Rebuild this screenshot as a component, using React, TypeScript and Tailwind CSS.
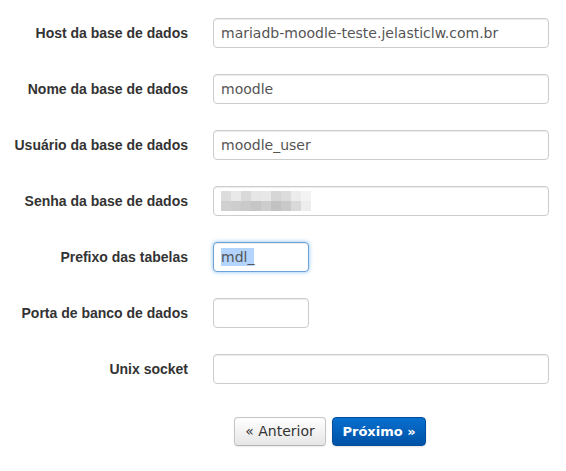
const labelCls =
  "w-[188px] shrink-0 text-right text-[14px] font-bold text-[#333] font-['Liberation_Sans',Arial,sans-serif]";
const inputCls =
  "h-[30px] rounded-[4px] border border-[#ccc] bg-white px-[7px] text-[14px] text-[#555] font-['DejaVu_Sans',Verdana,sans-serif] shadow-[inset_0_1px_1px_rgba(0,0,0,0.075)] outline-none";

// pixelated blur over the password
const blurTop = [
  'bg-[#dcdcdc]', 'bg-[#e9e9e9]', 'bg-[#d9d9d9]', 'bg-[#e6e6e6]', 'bg-[#e8e8e8]',
  'bg-[#d6d6d6]', 'bg-[#dcdcdc]', 'bg-[#ececec]', 'bg-[#f3f3f3]',
];
const blurBottom = [
  'bg-[#d0d0d0]', 'bg-[#cdcdcd]', 'bg-[#cacaca]', 'bg-[#c6c6c6]', 'bg-[#cdcdcd]',
  'bg-[#c2c2c2]', 'bg-[#c9c9c9]', 'bg-[#d9d9d9]', 'bg-[#ededed]',
];

function Row({ label, children }: { label: string; children: React.ReactNode }) {
  return (
    <div className="flex items-center h-[30px]">
      <label className={labelCls}>{label}</label>
      <div className="ml-[25px] flex">{children}</div>
    </div>
  );
}

export default function App() {
  return (
    <div className="w-[566px] h-[471px] bg-white pt-[18px]">
      <div className="flex flex-col gap-[26px]">
        <Row label="Host da base de dados">
          <input className={`${inputCls} w-[336px]`} defaultValue="mariadb-moodle-teste.jelasticlw.com.br" />
        </Row>
        <Row label="Nome da base de dados">
          <input className={`${inputCls} w-[336px]`} defaultValue="moodle" />
        </Row>
        <Row label="Usuário da base de dados">
          <input className={`${inputCls} w-[336px]`} defaultValue="moodle_user" />
        </Row>
        <Row label="Senha da base de dados">
          <div className={`${inputCls} w-[336px] flex items-center`}>
            <div className="grid grid-cols-9 w-[90px] h-[20px] blur-[0.4px]">
              {blurTop.map((c, i) => (
                <span key={`t${i}`} className={c} />
              ))}
              {blurBottom.map((c, i) => (
                <span key={`b${i}`} className={c} />
              ))}
            </div>
          </div>
        </Row>
        <Row label="Prefixo das tabelas">
          <div className="h-[30px] w-[96px] rounded-[4px] border border-[#6fa0d8] bg-white px-[7px] flex items-center shadow-[inset_0_1px_1px_rgba(0,0,0,0.075),0_0_4px_rgba(82,168,236,0.7)]">
            <span className="bg-[#b3d4fc] text-[14px] leading-[18px] text-[#555] font-['DejaVu_Sans',Verdana,sans-serif]">
              mdl_
            </span>
          </div>
        </Row>
        <Row label="Porta de banco de dados">
          <input className={`${inputCls} w-[96px]`} defaultValue="" />
        </Row>
        <Row label="Unix socket">
          <input className={`${inputCls} w-[336px]`} defaultValue="" />
        </Row>
      </div>

      <div className="flex gap-[6px] pl-[234px] mt-[33px]">
        <button className="h-[29px] w-[92px] rounded-[4px] border border-[#c5c5c5] border-b-[#b3b3b3] bg-gradient-to-b from-white to-[#e6e6e6] text-[14px] text-[#333] font-['DejaVu_Sans',Verdana,sans-serif] shadow-[0_1px_2px_rgba(0,0,0,0.08)]">
          « Anterior
        </button>
        <button className="h-[29px] w-[94px] rounded-[4px] border border-[#004c9e] bg-gradient-to-b from-[#0a6fcf] to-[#0052a6] text-[13px] font-bold text-white font-['DejaVu_Sans',Verdana,sans-serif] shadow-[0_1px_2px_rgba(0,0,0,0.12)]">
          Próximo »
        </button>
      </div>
    </div>
  );
}
